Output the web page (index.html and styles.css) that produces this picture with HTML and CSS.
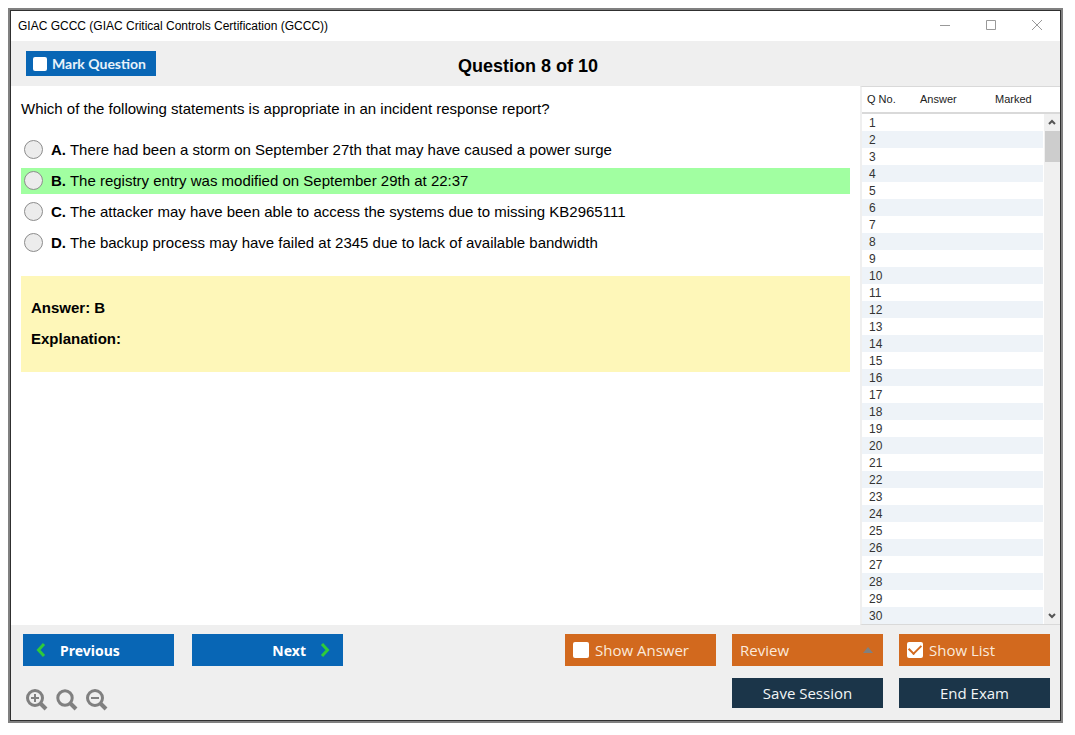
FILE: index.html
```html
<!DOCTYPE html>
<html lang="en">
<head>
<meta charset="utf-8">
<meta name="viewport" content="width=device-width, initial-scale=1">
<title>GIAC GCCC</title>
<link rel="stylesheet" href="styles.css">
</head>
<body>
<div class="window">
  <header class="titlebar">
    <span class="title">GIAC GCCC (GIAC Critical Controls Certification (GCCC))</span>
    <div class="window-controls">
      <button type="button" aria-label="Minimize"><svg viewBox="0 0 12 12"><path d="M1 5.500h10"/></svg></button>
      <button type="button" aria-label="Maximize"><svg viewBox="0 0 12 12"><path d="M1.500 0.500h9v9h-9z"/></svg></button>
      <button type="button" aria-label="Close"><svg viewBox="0 0 12 12"><path d="M1 0l10 10M11 0L1 10"/></svg></button>
    </div>
  </header>

  <div class="toolbar">
    <label class="mark"><input type="checkbox" class="check check-small">Mark Question</label>
    <h1 class="counter">Question 8 of 10</h1>
  </div>

  <main class="content">
    <section class="question">
      <p class="prompt">Which of the following statements is appropriate in an incident response report?</p>
      <div class="options">
        <label class="option"><input type="radio" name="answer" class="radio"><span><b>A.</b> There had been a storm on September 27th that may have caused a power surge</span></label>
        <label class="option correct"><input type="radio" name="answer" class="radio"><span><b>B.</b> The registry entry was modified on September 29th at 22:37</span></label>
        <label class="option"><input type="radio" name="answer" class="radio"><span><b>C.</b> The attacker may have been able to access the systems due to missing KB2965111</span></label>
        <label class="option"><input type="radio" name="answer" class="radio"><span><b>D.</b> The backup process may have failed at 2345 due to lack of available bandwidth</span></label>
      </div>
      <div class="explanation">
        <p>Answer: B</p>
        <p>Explanation:</p>
      </div>
    </section>

    <aside class="list">
      <table class="questions">
        <thead><tr><th class="col-number">Q No.</th><th class="col-answer">Answer</th><th>Marked</th></tr></thead>
        <tbody>
          <tr><td>1</td><td></td><td></td></tr>
          <tr><td>2</td><td></td><td></td></tr>
          <tr><td>3</td><td></td><td></td></tr>
          <tr><td>4</td><td></td><td></td></tr>
          <tr><td>5</td><td></td><td></td></tr>
          <tr><td>6</td><td></td><td></td></tr>
          <tr><td>7</td><td></td><td></td></tr>
          <tr><td>8</td><td></td><td></td></tr>
          <tr><td>9</td><td></td><td></td></tr>
          <tr><td>10</td><td></td><td></td></tr>
          <tr><td>11</td><td></td><td></td></tr>
          <tr><td>12</td><td></td><td></td></tr>
          <tr><td>13</td><td></td><td></td></tr>
          <tr><td>14</td><td></td><td></td></tr>
          <tr><td>15</td><td></td><td></td></tr>
          <tr><td>16</td><td></td><td></td></tr>
          <tr><td>17</td><td></td><td></td></tr>
          <tr><td>18</td><td></td><td></td></tr>
          <tr><td>19</td><td></td><td></td></tr>
          <tr><td>20</td><td></td><td></td></tr>
          <tr><td>21</td><td></td><td></td></tr>
          <tr><td>22</td><td></td><td></td></tr>
          <tr><td>23</td><td></td><td></td></tr>
          <tr><td>24</td><td></td><td></td></tr>
          <tr><td>25</td><td></td><td></td></tr>
          <tr><td>26</td><td></td><td></td></tr>
          <tr><td>27</td><td></td><td></td></tr>
          <tr><td>28</td><td></td><td></td></tr>
          <tr><td>29</td><td></td><td></td></tr>
          <tr><td>30</td><td></td><td></td></tr>
        </tbody>
      </table>
      <div class="scrollbar" aria-hidden="true">
        <svg class="scroll-arrow" viewBox="0 0 8 6"><path d="M1 5l3-3 3 3"/></svg>
        <div class="thumb"></div>
        <svg class="scroll-arrow" viewBox="0 0 8 6"><path d="M1 1l3 3 3-3"/></svg>
      </div>
    </aside>
  </main>

  <footer class="footer">
    <div class="left-tools">
      <div class="nav">
        <button type="button" class="button blue"><svg class="chevron" viewBox="0 0 10 16"><path d="M8 2L2.500 8 8 14"/></svg>Previous</button>
        <button type="button" class="button blue next">Next<svg class="chevron" viewBox="0 0 10 16"><path d="M2 2l5.500 6L2 14"/></svg></button>
      </div>
      <div class="zoom">
        <button type="button" aria-label="Zoom in"><svg viewBox="0 0 22 22"><circle cx="9" cy="9" r="7.500"/><path class="handle" d="M14.500 14.500l5.500 5.500"/><path class="sign" d="M5 9h8M9 5v8"/></svg></button>
        <button type="button" aria-label="Reset zoom"><svg viewBox="0 0 22 22"><circle class="heavy" cx="9" cy="9" r="7.200"/><path class="handle" d="M14.500 14.500l5.500 5.500"/></svg></button>
        <button type="button" aria-label="Zoom out"><svg viewBox="0 0 22 22"><circle cx="9" cy="9" r="7.500"/><path class="handle" d="M14.500 14.500l5.500 5.500"/><path class="sign" d="M5 9h8"/></svg></button>
      </div>
    </div>
    <div class="actions">
      <label class="button orange"><input type="checkbox" class="check">Show Answer</label>
      <button type="button" class="button orange review" aria-haspopup="menu">Review<svg class="caret" viewBox="0 0 10 6"><path d="M0 6l5-6 5 6z"/></svg></button>
      <label class="button orange"><input type="checkbox" class="check" checked>Show List</label>
      <button type="button" class="button navy save">Save Session</button>
      <button type="button" class="button navy">End Exam</button>
    </div>
  </footer>
</div>
</body>
</html>
```

FILE: styles.css
```css
* { box-sizing: border-box; }

body {
  margin: 0;
  padding: 8px 12px 12px 8px;
  min-height: 100vh;
  display: flex;
  background: #fff;
  color: #000;
  font-family: "Liberation Sans", Arial, sans-serif;
  font-size: 15px;
}

button {
  border: 0;
  padding: 0;
  background: none;
  font: inherit;
  color: inherit;
}

p, h1 { margin: 0; }
svg { display: block; fill: none; }

.window {
  flex: 1;
  display: flex;
  flex-direction: column;
  border: 2px solid #808080;
  outline: 1px solid #303030;
  outline-offset: -3px;
  padding: 1px;
  background: #efefef;
}

.titlebar {
  display: flex;
  justify-content: space-between;
  align-items: center;
  height: 30px;
  padding: 0 17px 0 7px;
  background: #fff;
  font-size: 12px;
}
.window-controls { display: flex; gap: 34px; }
.window-controls svg { width: 12px; height: 12px; stroke: #999; }

.toolbar {
  display: grid;
  grid-template-columns: 1fr auto 1fr;
  align-items: center;
  height: 45px;
  padding: 0 30px 0 15px;
}
.mark {
  display: flex;
  align-items: center;
  justify-self: start;
  gap: 5px;
  width: 130px;
  height: 25px;
  padding-left: 7px;
  background: #0866b5;
  color: #e8f2fa;
  font: bold 14px Lato, sans-serif;
}
.counter { font-size: 18px; line-height: 21px; padding-top: 6px; }

.check {
  appearance: none;
  display: grid;
  place-items: center;
  flex: none;
  width: 16px;
  height: 16px;
  margin: 0;
  border-radius: 2px;
  background: #fff;
}
.check-small { width: 14px; height: 14px; }
.check:checked::before {
  content: "";
  width: 10px;
  height: 6px;
  margin-bottom: 3px;
  border: solid #d2691e;
  border-width: 0 0 2px 2px;
  transform: rotate(-45deg);
}

.content { flex: 1; display: flex; background: #fff; }

.question { flex: 1; padding: 10px; }
.prompt { line-height: 26px; }
.options { display: grid; gap: 5px; margin-top: 15px; }
.option {
  display: flex;
  align-items: center;
  gap: 8px;
  min-height: 26px;
  padding: 0 0 2px 3px;
}
.correct { background: #a1ffa1; }
.radio {
  appearance: none;
  flex: none;
  width: 19px;
  height: 19px;
  margin: 0;
  border: 1px solid #8c8c8c;
  border-radius: 50%;
  background: #ececec;
}
.explanation {
  display: grid;
  gap: 5px;
  margin-top: 20px;
  padding: 19px 10px 20px;
  background: #fef7b9;
  font-weight: bold;
  line-height: 26px;
}

.list {
  display: grid;
  grid-template-columns: minmax(0, 1fr) 17px;
  width: 200px;
  border-left: 2px solid #efefef;
  border-top: 1px solid #d9d9d9;
  border-bottom: 1px solid #d9d9d9;
  font-size: 12px;
}
.questions {
  width: 100%;
  grid-area: 1 / 1 / 2 / 3;
  align-self: start;
  border-collapse: collapse;
  table-layout: fixed;
  color: #333;
}
.questions th {
  height: 26px;
  padding: 0 0 2px 5px;
  border-bottom: 2px solid #d9d9d9;
  color: #222;
  font-size: 11px;
  font-weight: normal;
  text-align: left;
}
.questions .col-number { width: 53px; }
.questions .col-answer { width: 75px; }
.questions td { height: 17px; padding: 2px 0 0 7px; line-height: 15px; }
.questions tbody tr:nth-child(even) { background: #eef3f8; }

.scrollbar {
  grid-area: 1 / 2;
  display: flex;
  flex-direction: column;
  align-items: center;
  margin-top: 27px;
  padding: 5px 0;
  border-left: 1px solid #fff;
  background: #f0f0f0;
  z-index: 1;
}
.scroll-arrow { width: 8px; height: 6px; stroke: #555; stroke-width: 2; }
.thumb {
  width: 15px;
  height: 31px;
  margin: 6px 0 auto;
  background: #cdcdcd;
}

.footer {
  display: flex;
  justify-content: space-between;
  padding: 9px 10px 9px 12px;
}
.nav { display: flex; gap: 18px; }
.button {
  display: flex;
  align-items: center;
  gap: 6px;
  width: 151px;
  height: 32px;
  padding: 0 8px 1px;
  font-family: "Open Sans", sans-serif;
  font-size: 15px;
}
.blue {
  gap: 14px;
  padding: 0 13px;
  background: #0866b5;
  color: #fff;
  font-family: "Noto Sans", sans-serif;
  font-size: 14px;
  font-weight: bold;
}
.next { justify-content: flex-end; }
.chevron { width: 10px; height: 16px; stroke: #2fcb3a; stroke-width: 3; }

.zoom { display: flex; gap: 8px; margin: 23px 0 0 3px; }
.zoom svg { width: 22px; height: 22px; stroke: #808080; stroke-width: 3; }
.zoom .handle { stroke-width: 4; }
.zoom .sign { stroke-width: 2; }

.actions {
  display: grid;
  grid-template-columns: repeat(3, auto);
  gap: 12px 16px;
  align-content: start;
}
.orange { background: #d2691e; color: #fbe9dc; }
.review { justify-content: space-between; padding-right: 10px; }
.caret { width: 10px; height: 6px; fill: #808080; }
.navy {
  justify-content: center;
  height: 30px;
  background: #1b3549;
  color: #f2f5f7;
}
.save { grid-column: 2; }
```
